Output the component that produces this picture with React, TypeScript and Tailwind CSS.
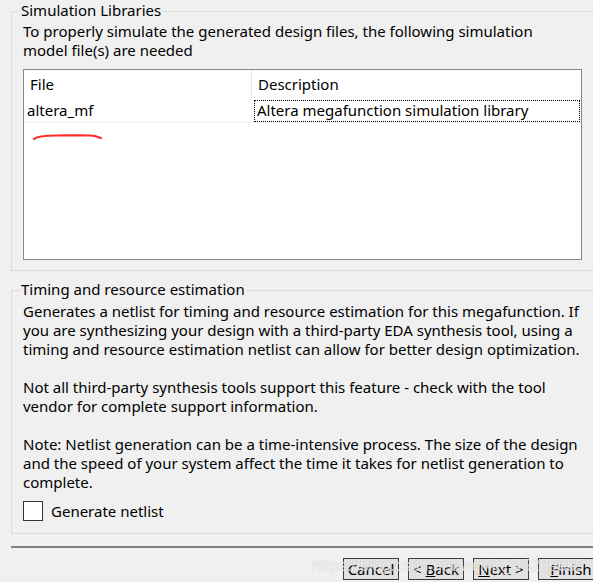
import React from "react";

const font = { fontFamily: '"Noto Sans", "Open Sans", sans-serif' };

function GroupBox({ title, className, children }: { title: string; className?: string; children: React.ReactNode }) {
  return (
    <div className={"relative border border-r-0 border-[#dcdcdc] " + (className ?? "")}>
      <div className="absolute left-[8px] top-[-11px] bg-[#f0f0f0] px-[1px] leading-[19px] text-[15px] text-black whitespace-nowrap">
        {title}
      </div>
      {children}
    </div>
  );
}

function Btn({ children, className }: { children: React.ReactNode; className?: string }) {
  return (
    <div
      className={
        "h-[22px] border border-[#3c3c3c] bg-[#e1e1e1] flex items-center justify-center text-[15px] leading-[18px] text-black " +
        (className ?? "")
      }
    >
      {children}
    </div>
  );
}

export default function App() {
  return (
    <div className="w-[593px] h-[582px] bg-[#f0f0f0] overflow-hidden relative text-black" style={font}>
      <div className="pl-[11px] pt-[11px] w-[620px]">
        <GroupBox title="Simulation Libraries" className="h-[260px] pl-[11px] pt-[10px]">
          <div className="text-[15px] leading-[19px] whitespace-nowrap">
            To properly simulate the generated design files, the following simulation
            <br />
            model file(s) are needed
          </div>
          <div className="mt-[9px] w-[559px] h-[191px] border border-[#828790] bg-white relative">
            <div className="flex h-[30px] text-[15px] leading-[19px]">
              <div className="w-[228px] border-r border-[#e5e5e5] pl-[6px] pt-[5px]">File</div>
              <div className="pl-[6px] pt-[5px]">Description</div>
            </div>
            <div className="flex h-[23px] border-b border-[#f0f0f0] text-[15px] leading-[19px]">
              <div className="w-[230px] pl-[3px] pt-[1px]">altera_mf</div>
              <div className="flex-1 mr-[1px] border border-dotted border-black pl-[2px] leading-[19px]">
                Altera megafunction simulation library
              </div>
            </div>
            <svg className="absolute left-[8px] top-[62px]" width="72" height="10" viewBox="0 0 72 10">
              <path
                d="M2 7 C 5 4.5, 12 3.5, 24 3.5 S 50 3, 58 3.5 S 66 5.5, 69 6"
                stroke="#ff2a2a"
                strokeWidth="2.2"
                fill="none"
                strokeLinecap="round"
              />
            </svg>
          </div>
        </GroupBox>

        <GroupBox title="Timing and resource estimation" className="mt-[19px] h-[244px] pl-[11px] pt-[11px]">
          <div className="text-[15px] leading-[19px] whitespace-nowrap">
            Generates a netlist for timing and resource estimation for this megafunction. If
            <br />
            you are synthesizing your design with a third-party EDA synthesis tool, using a
            <br />
            timing and resource estimation netlist can allow for better design optimization.
            <br />
            <br />
            Not all third-party synthesis tools support this feature - check with the tool
            <br />
            vendor for complete support information.
            <br />
            <br />
            Note: Netlist generation can be a time-intensive process. The size of the design
            <br />
            and the speed of your system affect the time it takes for netlist generation to
            <br />
            complete.
          </div>
          <div className="mt-[9px] flex items-center gap-[8px]">
            <div className="w-[20px] h-[20px] border border-[#333333] bg-white" />
            <span className="text-[15px] leading-[19px]">Generate netlist</span>
          </div>
        </GroupBox>

        <div className="mt-[12px] h-[2px] bg-[#808080]" />

        <div className="mt-[10px] pl-[332px] flex gap-[9px]">
          <Btn className="w-[56px]">Cancel</Btn>
          <Btn className="w-[56px]">
            &lt; <span className="underline ml-[4px]">B</span>ack
          </Btn>
          <Btn className="w-[56px]">
            <span className="underline">N</span>ext &gt;
          </Btn>
          <Btn className="w-[66px]">
            <span className="underline">F</span>inish
          </Btn>
        </div>
      </div>

      <div
        className="absolute left-[312px] top-[556px] text-[16px] leading-[20px] text-white/70 whitespace-nowrap pointer-events-none"
        style={{ fontFamily: '"Liberation Sans", sans-serif', textShadow: "0 0 1px rgba(120,120,120,0.4)" }}
      >
        https://blog.csdn.net/weixin_45299689
      </div>
    </div>
  );
}
